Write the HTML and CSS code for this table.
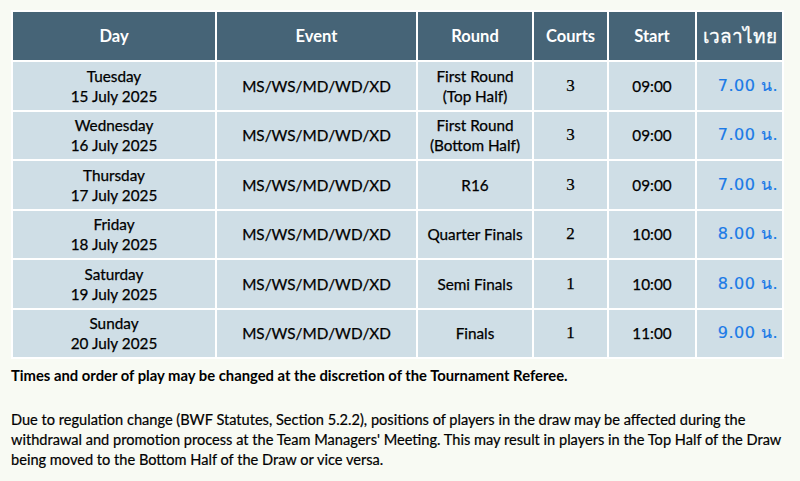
FILE: index.html
```html
<!DOCTYPE html>
<html>
<head>
<meta charset="utf-8">
<link rel="stylesheet" href="styles.css">
</head>
<body>
<div class="page">
<table class="sched">
<colgroup>
<col class="c-day"><col class="c-event"><col class="c-round"><col class="c-courts"><col class="c-start"><col class="c-thai">
</colgroup>
<thead>
<tr><th>Day</th><th>Event</th><th>Round</th><th>Courts</th><th>Start</th><th class="th-thai">เวลาไทย</th></tr>
</thead>
<tbody>
<tr><td>Tuesday<br>15 July 2025</td><td>MS/WS/MD/WD/XD</td><td class="round">First Round<br>(Top Half)</td><td class="courts">3</td><td>09:00</td><td class="thai">7.00 น.</td></tr>
<tr><td>Wednesday<br>16 July 2025</td><td>MS/WS/MD/WD/XD</td><td class="round">First Round<br>(Bottom Half)</td><td class="courts">3</td><td>09:00</td><td class="thai">7.00 น.</td></tr>
<tr><td>Thursday<br>17 July 2025</td><td>MS/WS/MD/WD/XD</td><td class="round">R16</td><td class="courts">3</td><td>09:00</td><td class="thai">7.00 น.</td></tr>
<tr><td>Friday<br>18 July 2025</td><td>MS/WS/MD/WD/XD</td><td class="round">Quarter Finals</td><td class="courts">2</td><td>10:00</td><td class="thai">8.00 น.</td></tr>
<tr><td>Saturday<br>19 July 2025</td><td>MS/WS/MD/WD/XD</td><td class="round">Semi Finals</td><td class="courts">1</td><td>10:00</td><td class="thai">8.00 น.</td></tr>
<tr><td>Sunday<br>20 July 2025</td><td>MS/WS/MD/WD/XD</td><td class="round">Finals</td><td class="courts">1</td><td>11:00</td><td class="thai">9.00 น.</td></tr>
</tbody>
</table>
<p class="note">Times and order of play may be changed at the discretion of the Tournament Referee.</p>
<p class="para">Due to regulation change (BWF Statutes, Section 5.2.2), positions of players in the draw may be affected during the withdrawal and promotion process at the Team Managers' Meeting. This may result in players in the Top Half of the Draw being moved to the Bottom Half of the Draw or vice versa.</p>
</div>
</body>
</html>
```
FILE: styles.css
```css
html, body {
  margin: 0;
  padding: 0;
  background: #f8faf3;
}
.page {
  padding: 10px 0 0 11px;
  font-family: Lato, "Open Sans", sans-serif;
  color: #000;
}
.sched {
  border-collapse: separate;
  border-spacing: 2px;
  background: #ffffff;
  table-layout: fixed;
  width: 773px;
}
.c-day { width: 202px; }
.c-event { width: 199px; }
.c-round { width: 114px; }
.c-courts { width: 73px; }
.c-start { width: 86px; }
.c-thai { width: 85px; }
.sched th {
  background: #466477;
  color: #fff;
  font-weight: bold;
  font-size: 16.5px;
  height: 48px;
  padding: 0;
  text-align: center;
  white-space: nowrap;
  overflow: hidden;
}
.sched th.th-thai {
  font-size: 19px;
  font-weight: normal;
  text-align: center;
  padding: 0;
  -webkit-text-stroke: 0.3px #fff;
}
.sched td {
  background: #cfdee6;
  font-size: 15.3px;
  line-height: 20px;
  height: 47.5px;
  padding: 0;
  text-align: center;
  white-space: nowrap;
  -webkit-text-stroke: 0.25px #000;
}
.sched td.courts {
  font-family: "Liberation Serif", "DejaVu Serif", serif;
  font-size: 17px;
}
.sched td.thai {
  color: #1b7ae6;
  font-family: "DejaVu Sans", sans-serif;
  font-size: 16px;
  text-align: right;
  padding-right: 4px;
  letter-spacing: 0.5px;
  -webkit-text-stroke: 0.2px #1b7ae6;
}
.note {
  margin: 6px 0 0 0;
  font-weight: bold;
  font-size: 14.8px;
  line-height: 20px;
}
.para {
  margin: 25px 0 0 0;
  font-size: 14.6px;
  line-height: 20px;
  width: 775px;
  -webkit-text-stroke: 0.2px #000;
}
```
